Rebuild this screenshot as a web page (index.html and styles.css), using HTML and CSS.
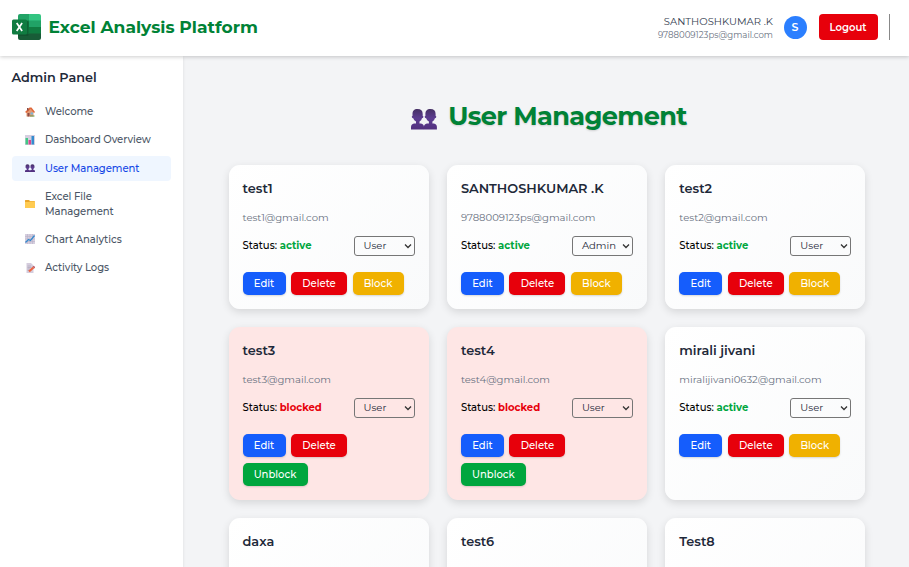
FILE: index.html
```html
<!DOCTYPE html>
<html lang="en">
<head>
<meta charset="utf-8">
<title>Excel Analysis Platform</title>
<link rel="stylesheet" href="styles.css">
</head>
<body>
<header class="topbar">
  <svg class="logo" viewBox="0 0 29 28">
    <path fill="#21a366" d="M8 1h10v7H6V3q0-2 2-2z"/><path fill="#33c481" d="M17 1h10q2 0 2 2v5H17z"/>
    <path fill="#185c37" d="M6 14h23v11q0 2-2 2H8q-2 0-2-2z"/><path fill="#107c41" d="M6 7.500h11V21H6zM17 14h12v6.500H17z"/><path fill="#21a366" d="M17 7.500h12V14H17z"/>
    <path fill="#0b4a2a" opacity=".5" d="M6 8h9q1.500 0 1.500 1.500v12q0 1.500-1.500 1.500H6z"/>
    <rect y="6.500" width="15" height="15" rx="1.500" fill="#107c41"/>
    <path d="M4.700 10l5.400 8M10.100 10l-5.400 8" stroke="#fff" stroke-width="1.700"/>
  </svg>
  <h1 class="brand">Excel Analysis Platform</h1>
  <div class="account"><div class="account-name">SANTHOSHKUMAR .K</div><div class="account-mail">9788009123ps@gmail.com</div></div>
  <div class="avatar">S</div>
  <button class="logout">Logout</button>
  <span class="divider"></span>
</header>
<div class="shell">
  <aside class="sidebar">
    <h2 class="side-title">Admin Panel</h2>
    <nav class="nav">
      <a class="nav-item"><svg class="ico" viewBox="0 0 20 20"><path fill="#e39a75" d="M3 9l7-6 7 6v10H3z"/><path fill="#e0683a" d="M0 10L9 1h4l7 9-2 2-7-8-8 8z"/><path fill="#8b4c46" d="M4 2h3v5H4zM5 12h4v7H5z"/><path fill="#77b7d8" d="M11 11h5v4h-5z"/><path fill="#62994a" d="M10 17h9v2h-9z"/></svg><span>Welcome</span></a>
      <a class="nav-item"><svg class="ico" viewBox="0 0 20 20"><path fill="#d5cfe0" d="M0 0h20v20H0z"/><path fill="#43c785" d="M1 6h5v13H1z"/><path fill="#d84691" d="M7 10h5v9H7z"/><path fill="#348cce" d="M13 2h5v17h-5z"/></svg><span>Dashboard Overview</span></a>
      <a class="nav-item active"><svg class="ico" viewBox="0 0 26 22"><use href="#people"/></svg><span>User Management</span></a>
      <a class="nav-item tall"><svg class="ico" viewBox="0 0 20 20"><path fill="#e9a52c" d="M0 3q0-1 1-1h7l2 2h9l1 2v12H0z"/><path fill="#ffcb51" d="M0 6h8l2-1h10v12q0 1-1 1H1q-1 0-1-1z"/></svg><span>Excel File<br>Management</span></a>
      <a class="nav-item"><svg class="ico" viewBox="0 0 20 20"><path fill="#d5cede" d="M0 0h20v20H0z"/><path stroke="#b5adc5" d="M0 5h20M0 10h20M0 15h20M5 0v20M10 0v20M15 0v20"/><path d="M1 17l6-6 4 2 8-10" fill="none" stroke="#3288cd" stroke-width="2.500"/></svg><span>Chart Analytics</span></a>
      <a class="nav-item"><svg class="ico" viewBox="0 0 20 20"><path fill="#d5cddd" d="M3 0h9l5 5v15H3z"/><path stroke="#9e94ab" d="M5 6h7M5 9h8M5 12h5M5 15h4"/><path stroke="#ee6541" stroke-width="4.500" d="M8 17l9-8"/><path fill="#b64a57" d="M15 7l4 4 1-3-2-2z"/></svg><span>Activity Logs</span></a>
    </nav>
  </aside>
  <main class="main">
    <div class="title-row">
      <svg class="title-icon" viewBox="0 0 26 22">
        <defs><linearGradient id="skin" x1="0" y1="0" x2="0" y2="1"><stop offset="0" stop-color="#463064"/><stop offset=".45" stop-color="#5d3d91"/><stop offset="1" stop-color="#52307e"/></linearGradient></defs>
        <g id="people"><path fill="url(#skin)" d="M6.500 1C3 1 1.500 3 1.500 6v2q-1 0-.6 1.200.3 1 1.300 1 .8 2.300 2.800 3.300v2H3Q0 16 0 19v2.500h13V19q0-3-3-3.500H8.500v-2q2-1 2.500-3.300 1 0 1.300-1Q12.700 8 11.700 8V6q0-5-5.200-5z"/><path fill="url(#skin)" transform="translate(12.900)" d="M6.500 1C3 1 1.500 3 1.500 6v2q-1 0-.6 1.200.3 1 1.300 1 .8 2.300 2.800 3.300v2H3Q0 16 0 19v2.500h13V19q0-3-3-3.500H8.500v-2q2-1 2.500-3.300 1 0 1.300-1Q12.700 8 11.700 8V6q0-5-5.200-5z"/></g>
      </svg>
      <h2 class="title">User Management</h2>
    </div>
    <section class="cards" id="cards"></section>
  </main>
</div>
<script src="app.js"></script>
</body>
</html>
```
FILE: styles.css
```css
* { box-sizing: border-box; }
body { margin: 0; height: 567px; overflow: hidden; display: flex; flex-direction: column; background: #f3f4f6; color: #000; font-family: Montserrat, Inter, "Liberation Sans", sans-serif; font-size: 10.05px; }
h1, h2, h3, p { margin: 0; }
button { border: 0; font-family: inherit; color: #fff; white-space: nowrap; }
.topbar { flex: none; height: 56px; padding: 0 19.500px 2px 11.500px; display: flex; align-items: center; background: #fff; box-shadow: 0 1px 4px rgba(0,0,0,.2); position: relative; z-index: 1; }
.logo { width: 29px; height: 28px; margin-right: 8px; }
.brand { color: #008236; font-size: 17.1px; line-height: 24px; font-weight: 700; }
.account { margin-left: auto; text-align: right; white-space: nowrap; }
.account-name { font-size: 10.05px; line-height: 14px; padding-top: 1px; color: #364153; }
.account-mail { font-size: 8.6px; line-height: 12px; color: #6a7282; }
.avatar { width: 23px; height: 23px; margin: 0 12px 0 10.500px; border-radius: 50%; background: #2b7fff; color: #fff; display: grid; place-items: center; font-weight: 600; font-size: 11px; }
.logout { width: 59px; height: 26px; padding: 0; border-radius: 4px; background: #e7000b; font-size: 10.05px; font-weight: 600; }
.divider { width: 1px; height: 26px; margin-left: 11px; background: #888; }
.shell { flex: 1; min-height: 0; display: flex; }
.sidebar { width: 182.500px; flex: none; background: #fff; padding: 13px 11.500px; box-shadow: 0 1px 3px rgba(0,0,0,.1); }
.side-title { font-size: 12.8px; line-height: 18px; font-weight: 600; color: #1e2939; }
.nav { margin-top: 12px; display: flex; flex-direction: column; gap: 3.200px; }
.nav-item { min-height: 25.200px; display: flex; align-items: center; gap: 10.500px; padding: 0 13px; border-radius: 4px; color: #4a5565; line-height: 15px; white-space: nowrap; font-weight: 500; letter-spacing: -.06px; }
.nav-item.tall { min-height: 39.500px; }
.nav-item.active { background: #eff6ff; color: #1447e6; }
.ico { width: 10px; height: 10px; flex: none; }
.main { flex: 1; padding: 41px 43.500px 0 46px; }
.title-row { display: flex; align-items: center; justify-content: center; height: 38px; padding-left: 4px; }
.title-icon { width: 26px; height: 22px; margin: 5px 11px 0 0; }
.title { color: #008236; font-size: 25.6px; line-height: 38px; font-weight: 700; letter-spacing: -.64px; text-shadow: 0 1px 2px rgba(0,0,0,.15); }
.cards { margin-top: 29.500px; display: grid; grid-template-columns: repeat(3, 200px); column-gap: 18.400px; row-gap: 18px; grid-template-rows: 144px 173px 144px; }
.card { border-radius: 11px; padding: 15.200px 14px 13px; background: linear-gradient(135deg, #fff, #f9fafb); box-shadow: 0 3px 8px rgba(0,0,0,.12); }
.card:nth-child(n+4) { padding-top: 15.800px; }
.card:nth-child(n+4) .mail { margin-top: 12.400px; }
.card.blocked { background: #fee6e5; }
.name { font-size: 12.9px; line-height: 18px; font-weight: 600; color: #1e2939; }
.mail { margin-top: 12.900px; line-height: 14px; color: #6a7282; }
.status-row { margin-top: 11px; height: 20px; display: flex; align-items: center; justify-content: space-between; font-weight: 500; }
.ok { color: #00a63e; font-weight: 700; }
.bad { color: #e7000b; font-weight: 700; }
.role { width: 61px; height: 20px; padding: 0 2px 0 9px; display: flex; align-items: center; justify-content: space-between; border: 1px solid #767676; border-radius: 3px; color: #1e2939; font-weight: 400; }
.chev { width: 8px; height: 6px; fill: none; stroke: #333; stroke-width: 1.300; }
.actions { margin-top: 16.500px; display: flex; flex-wrap: wrap; gap: 5.500px; }
.btn { height: 23px; padding: 0; border-radius: 5px; font-size: 10.05px; font-weight: 500; box-shadow: 0 1px 2px rgba(0,0,0,.15); }
.edit { width: 43px; background: #155dfc; }
.delete { width: 56px; background: #e7000b; }
.block { width: 51px; background: #f0b100; }
.unblock { width: 65px; background: #00a63e; }
```
FILE: app.js
```js
const users = [
  ["test1", "test1@gmail.com", "User", false],
  ["SANTHOSHKUMAR .K", "9788009123ps@gmail.com", "Admin", false],
  ["test2", "test2@gmail.com", "User", false],
  ["test3", "test3@gmail.com", "User", true],
  ["test4", "test4@gmail.com", "User", true],
  ["mirali jivani", "miralijivani0632@gmail.com", "User", false],
  ["daxa", "daxapilodara@gmail.com", "User", false],
  ["test6", "test6@gmail.com", "User", false],
  ["Test8", "test8@gmail.com", "User", false]
];
document.getElementById("cards").innerHTML = users.map(([name, mail, role, blocked]) => `
  <article class="card ${blocked ? "blocked" : ""}">
    <h3 class="name">${name}</h3>
    <p class="mail">${mail}</p>
    <div class="status-row"><span>Status: <span class="${blocked ? "bad" : "ok"}">${blocked ? "blocked" : "active"}</span></span>
      <span class="role">${role}<svg class="chev" viewBox="0 0 8 6"><path d="M1 1.500l3 3 3-3"/></svg></span></div>
    <div class="actions"><button class="btn edit">Edit</button><button class="btn delete">Delete</button><button class="btn ${blocked ? "unblock" : "block"}">${blocked ? "Unblock" : "Block"}</button></div>
  </article>`).join("");
```
